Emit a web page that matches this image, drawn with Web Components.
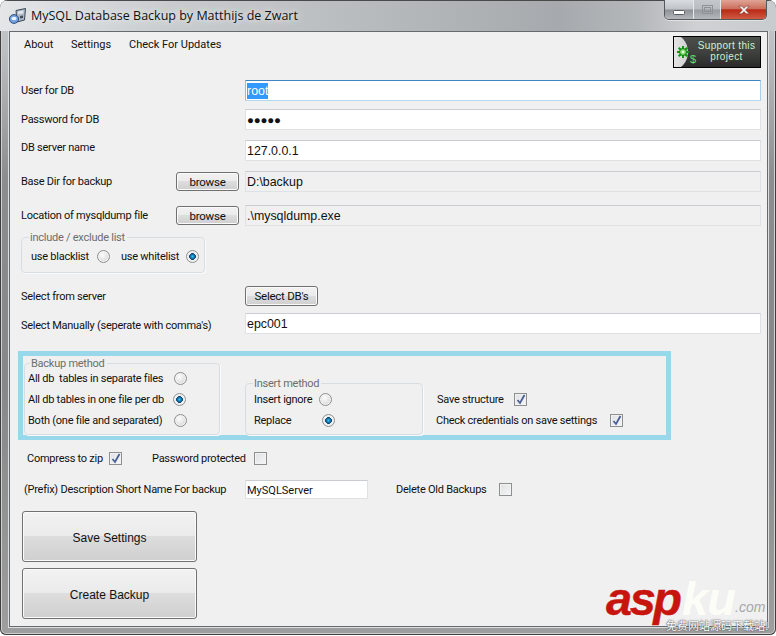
<!DOCTYPE html>
<html><head><meta charset="utf-8"><style>
html,body{margin:0;padding:0;width:776px;height:636px;overflow:hidden;background:#fff}
body{font:11px Roboto,"Liberation Sans",Arial,sans-serif;color:#111;letter-spacing:-.25px}
</style></head><body>
<app-window>
<title-bar slot="title">MySQL Database Backup by Matthijs de Zwart</title-bar>
<menu-row>
 <span style="width:47px">About</span><span style="width:58px">Settings</span><span>Check For Updates</span>
 <support-button slot="end">Support this<br>project</support-button>
</menu-row>
<form-row top="12" label="User for DB"><text-box selected value="root"></text-box></form-row>
<form-row top="8" label="Password for DB"><text-box value="●●●●●" pw></text-box></form-row>
<form-row top="10" shift="-3" label="DB server name"><text-box value="127.0.0.1"></text-box></form-row>
<form-row top="10" label="Base Dir for backup"><win-button slot="pre" w="63" h="19">browse</win-button><text-box readonly value="D:\backup"></text-box></form-row>
<form-row top="13" label="Location of mysqldump file"><win-button slot="pre" w="63" h="19">browse</win-button><text-box readonly value=".\mysqldump.exe"></text-box></form-row>
<group-box top="11" w="184" h="36" legend="include / exclude list">
 <div style="display:flex;align-items:center;height:100%;padding:3px 0 0 9px;box-sizing:border-box">
 <radio-opt w="66" style="margin-right:11px">use blacklist</radio-opt><radio-opt w="65" on>use whitelist</radio-opt></div>
</group-box>
<form-row top="13" h="20" label="Select from server"><win-button w="73" h="20">Select DB's</win-button></form-row>
<form-row top="7" shift="3" label="Select Manually (seperate with comma's)"><text-box value="epc001"></text-box></form-row>
<blue-box>
 <group-box w="196" h="72" legend="Backup method" legend-left="5" style="margin-left:1px;margin-top:7px">
  <div style="display:flex;flex-direction:column;padding:4px 0 0 3px">
   <radio-opt w="146" h="21">All db &nbsp;tables in separate files</radio-opt>
   <radio-opt w="145" h="21" on>All db tables in one file per db</radio-opt>
   <radio-opt w="146" h="21">Both (one file and separated)</radio-opt>
  </div>
 </group-box>
 <group-box w="178" h="52" legend="Insert method" legend-left="7" style="margin-left:25px;margin-top:27px">
  <div style="display:flex;flex-direction:column;padding:5px 0 0 8px">
   <radio-opt w="65" h="21">Insert ignore</radio-opt>
   <radio-opt w="68" h="21" on>Replace</radio-opt>
  </div>
 </group-box>
 <div style="display:flex;flex-direction:column;margin:33px 0 0 13px">
  <check-opt h="21" w="77" on style="margin-left:1px">Save structure</check-opt>
  <check-opt h="21" w="174" on>Check credentials on save settings</check-opt>
 </div>
</blue-box>
<div style="display:flex;margin-top:9px;margin-left:6px;height:18px;align-items:center">
 <check-opt w="82" on>Compress to zip</check-opt><span style="width:30px"></span><check-opt w="102">Password protected</check-opt>
</div>
<form-row top="13" h="19" pad="3" label="(Prefix) Description Short Name For backup"><text-box w="123" small value="MySQLServer"></text-box><check-opt style="margin-left:28px" w="103">Delete Old Backups</check-opt></form-row>
<win-button big style="margin:12px 0 0 1px" w="175" h="51">Save Settings</win-button>
<win-button big style="margin:6px 0 0 1px" w="175" h="51">Create Backup</win-button>
</app-window>
<site-mark></site-mark>
<script>
function def(name, css, html){
  customElements.define(name, class extends HTMLElement{
    connectedCallback(){
      if(this.shadowRoot) return;
      const s=this.attachShadow({mode:'open'});
      s.innerHTML='<style>'+css+'</style>'+(typeof html==='function'?html(this):html);
    }
  });
}
def('app-window',`
 :host{display:block;position:relative;width:776px;height:635px;box-sizing:border-box;border-radius:8px 8px 6px 6px;overflow:hidden;
  background:linear-gradient(#c6c9cb 0,#bcbfc1 8%,#8c8d8e 28%,#868788 60%,#9e9e9e 100%);
  box-shadow:inset 0 0 0 1px #3e3e3e,inset 0 0 0 2px #cfd1d3}
 .cap{height:31px}
 .client{box-sizing:border-box;margin:0 8px 0 9px;height:596px;background:#f0f0f0;border:1px solid #666a6d;padding:4px 0 0 11px;display:flex;flex-direction:column;box-shadow:0 0 0 1px #dcdee0}
`,`<div class="cap"><slot name="title"></slot></div><div class="client"><slot></slot></div>`);
def('title-bar',`
 :host{display:flex;align-items:center;height:31px;position:relative;padding:0 0 0 9px;font:12.5px "Open Sans","Noto Sans",sans-serif;letter-spacing:0;color:#111;
  background:linear-gradient(90deg,#e4e6e8 0,#dcdfe1 6%,#c9ccce 22%,#b6b9bb 50%,#a6aaae 72%,#b4b7ba 82%,#cfd1d3 90%,#c9cccf 100%);box-shadow:inset 0 1px 0 #4a4a4a}
 svg.i{flex:none;margin:1px 5px 0 0}
 .t{margin-top:0;text-shadow:0 0 5px #e8eaec,0 0 8px #e8eaec}
 .b{position:absolute;left:664px;top:0;display:flex;height:20px;width:103px;border:1px solid #56595c;border-top:0;border-radius:0 0 5px 5px;overflow:hidden;box-sizing:border-box;box-shadow:0 1px 0 #dfe1e3}
 .b i{display:flex;justify-content:center;box-sizing:border-box;height:100%}
 .m{width:29px;background:linear-gradient(#d9dce0 0,#bfc3c8 48%,#8d9196 52%,#b4b8bd 100%);border-right:1px solid #e6e8ea;align-items:flex-end;padding-bottom:4px}
 .x{width:27px;background:linear-gradient(#c4c7cb 0,#b9bcc0 48%,#989ca1 52%,#b4b8bc 100%);border-right:1px solid #e6e8ea;align-items:center}
 .c{flex:1;background:linear-gradient(#e0a496 0,#cd6f5e 45%,#b92a16 52%,#d05a43 100%);align-items:center}
`,()=>`<svg class="i" width="17" height="16" viewBox="0 0 17 16"><path d="M7 2.500L16.500.5l-1 11.500L8 14z" fill="#aeb8c6" stroke="#3a4652"/><path d="M9 3.500l5.500-1-.3 3-5 .8z" fill="#dfe6ee"/><path d="M11 8l3-.5v2.500l-3 .5z" fill="#45505e"/><ellipse cx="5" cy="11" rx="4.600" ry="4.400" fill="#6f9fe2" stroke="#33507c"/><ellipse cx="5" cy="10.500" rx="2.600" ry="1.700" fill="#eef4ff"/></svg>
 <span class="t"><slot></slot></span>
 <div class="b"><i class="m"><svg width="12" height="5"><rect x=".5" y=".5" width="11" height="4" rx="1" fill="#fff" stroke="#5a5e63"/></svg></i><i class="x"><svg width="11" height="9"><rect x=".5" y=".5" width="10" height="8" fill="none" stroke="#8d9399"/><rect x="2.500" y="2.500" width="6" height="4" fill="none" stroke="#8d9399"/></svg></i><i class="c"><svg width="12" height="10" viewBox="0 0 14 11"><path d="M1 1h3.400L7 3.700 9.600 1H13L8.800 5.500 13 10H9.600L7 7.300 4.400 10H1l4.200-4.500z" fill="#fff" stroke="#6b3a30" stroke-width=".7"/></svg></i></div>`);
def('menu-row',`
 :host{display:flex;height:32px;align-items:flex-start;position:relative;padding-left:3px;margin-right:6px;letter-spacing:0}
 .m{display:flex;padding-top:2px}
 ::slotted(span){display:block}
 .e{margin-left:auto}
`,`<div class="m"><slot></slot></div><div class="e"><slot name="end"></slot></div>`);
def('support-button',`
 :host{display:block;position:relative;width:88px;height:32px;box-sizing:border-box;border:1px solid #000;background:linear-gradient(#4d4f4d,#3f413f 50%,#2a2b2a);overflow:hidden;color:#d2f0cd;font:10px/11px "Liberation Sans",sans-serif;letter-spacing:.35px;text-align:center}
 .l{position:absolute;left:-18px;top:-3px;width:32px;height:36px;border-radius:50%;background:linear-gradient(90deg,#fff,#d0d0d0)}
 svg{position:absolute;left:3px;top:9px}
 .d{position:absolute;left:16px;top:16px;color:#5fe05f;font-size:11px;letter-spacing:0;line-height:13px}
 .t{position:absolute;left:19px;right:0;top:3px}
`,`<div class="l"></div><svg width="12" height="12" viewBox="0 0 12 12"><g stroke="#0a9a0a" stroke-width="2"><path d="M6 0v12M0 6h12M1.700 1.700l8.600 8.600M10.300 1.700l-8.600 8.600"/></g><circle cx="6" cy="6" r="3.500" fill="#7ddc6c" stroke="#0a7a0a"/><circle cx="6" cy="6" r="1.300" fill="#e8ffe0"/></svg><span class="d">$</span><div class="t"><slot></slot></div>`);
def('form-row',`
 :host{display:flex;align-items:center;position:relative;margin-right:6px}
 .l{width:155px;flex:none;white-space:nowrap;box-sizing:border-box}
 .p{width:69px;flex:none;display:flex}
 .c{flex:1;display:flex;align-items:center;min-width:0;height:100%}
`,t=>{
 const top=t.getAttribute('top')||0,h=t.getAttribute('h')||21,sh=+(t.getAttribute('shift')||0);
 t.style.marginTop=top+'px';t.style.height=h+'px';
 const pad=sh<0?`padding-bottom:${-sh*2}px;`:sh>0?`padding-top:${sh}px;`:'';
 const lp=t.getAttribute('pad')?`padding-left:${t.getAttribute('pad')}px;`:'';
 return `<div class="l" style="${pad}${lp}">${t.getAttribute('label')}</div><div class="p"><slot name="pre"></slot></div><div class="c"><slot></slot></div>`;
});
def('text-box',`
 :host{display:block;flex:1;box-sizing:border-box;height:100%;background:#fff;border:1px solid #dfe2e5;border-top-color:#c9cdd1;border-radius:1px;font:12.400px "Liberation Sans",sans-serif;letter-spacing:0;padding:0 0 0 1px;overflow:hidden}
 :host([selected]){border-color:#3f86bf #a9cfee #b5d8f2 #8fbde4}
 :host([readonly]){background:#f0f0f0}
 :host([small]){font:11px Roboto,sans-serif}
 div{display:flex;align-items:center;height:100%;white-space:nowrap;box-sizing:border-box;padding-top:1px}
 b{font-weight:normal;background:#3399ff;color:#fff;padding:1px 0}
 .pw{font-size:11.500px;letter-spacing:-.2px}
`,t=>{
 const v=t.getAttribute('value'),w=t.getAttribute('w');
 if(w){t.style.flex='none';t.style.width=w+'px'}
 return t.hasAttribute('selected')?`<div><b>${v}</b></div>`:`<div class="${t.hasAttribute('pw')?'pw':''}">${v}</div>`;
});
def('win-button',`
 :host{display:flex;align-items:center;justify-content:center;box-sizing:border-box;flex:none;border:1px solid #707070;border-radius:3px;background:linear-gradient(#f2f2f2 0,#ebebeb 48%,#dddddd 50%,#cfcfcf 100%);box-shadow:inset 0 0 0 1px #fbfbfb;font:11.500px Roboto,sans-serif;color:#111}
 :host([big]){font:12px "Liberation Sans",sans-serif;letter-spacing:0;padding-top:2px}
`,t=>{t.style.width=t.getAttribute('w')+'px';t.style.height=t.getAttribute('h')+'px';return '<slot></slot>'});
def('group-box',`
 :host{display:block;position:relative;box-sizing:border-box;flex:none;border:1px solid #d8dde2;border-radius:4px;box-shadow:1px 1px 0 #fafafa}
 .lg{position:absolute;top:-7px;background:#f0f0f0;padding:0 2px 0 1px;color:#6d6d6d;white-space:nowrap;line-height:13px}
`,t=>{t.style.width=t.getAttribute('w')+'px';t.style.height=t.getAttribute('h')+'px';
 if(t.getAttribute('top'))t.style.marginTop=t.getAttribute('top')+'px';
 return `<div class="lg" style="left:${t.getAttribute('legend-left')||7}px">${t.getAttribute('legend')}</div><slot></slot>`});
const hostH=t=>t.getAttribute('h')?`<style>:host{height:${t.getAttribute('h')}px}</style>`:'';
def('radio-opt',`
 :host{display:flex;align-items:center;white-space:nowrap;flex:none}
 .s{flex:none;width:var(--w)}
 i{flex:none;display:block;box-sizing:border-box;width:13px;height:13px;border-radius:50%;border:1px solid #8e8f8f;background:radial-gradient(circle at 40% 35%,#fdfdfd,#d9d9d9 75%);box-shadow:inset 0 0 0 1px #f4f4f4}
 i.on{background:radial-gradient(circle at 50% 50%,#3fc0ec 0,#0d6fa8 28%,#0b3a63 40%,#eef0f2 44%,#d8d8d8 100%)}
`,t=>`<span class="s" style="--w:${t.getAttribute('w')}px"><slot></slot></span><i class="${t.hasAttribute('on')?'on':''}"></i>`+hostH(t));
def('check-opt',`
 :host{display:flex;align-items:center;white-space:nowrap;flex:none}
 .s{flex:none;width:var(--w)}
 i{flex:none;display:block;box-sizing:border-box;width:13px;height:13px;border:1px solid #8e8f8f;background:linear-gradient(135deg,#dfe1e4,#f6f6f7);box-shadow:inset 0 0 0 1px #f2f2f2;position:relative}
 svg{position:absolute;left:1px;top:0}
`,t=>`<span class="s" style="--w:${t.getAttribute('w')}px"><slot></slot></span><i>${t.hasAttribute('on')?'<svg width="10" height="11" viewBox="0 0 10 11"><path d="M1.500 6l2.500 3L8.500 1" fill="none" stroke="#4a5f97" stroke-width="1.800"/></svg>':''}</i>`+hostH(t));
def('blue-box',`
 :host{display:flex;align-items:flex-start;box-sizing:border-box;width:653px;height:89px;margin:17px 0 0 -3px;border:5px solid #98d8ea}
`,'<slot></slot>');
def('site-mark',`
 :host{position:absolute;left:606px;top:578px;width:170px;height:56px;display:block;pointer-events:none;font-family:"Liberation Sans",sans-serif;letter-spacing:0}
 .a{position:absolute;left:0;top:3px;font:italic bold 47px/36px "Liberation Sans",sans-serif;color:#c8140e;letter-spacing:-2.500px;-webkit-text-stroke:.4px #c8140e}
 .k{position:absolute;left:76px;top:3px;font:italic bold 47px/36px "Liberation Sans",sans-serif;color:#fdfdf8;letter-spacing:-1px}
 .c{position:absolute;left:129px;top:20px;font:italic 14px/18px "Liberation Sans",sans-serif;color:#a8a8a8}
 .s{position:absolute;left:60px;top:40px;font:11px/14px "Noto Sans CJK SC",sans-serif;color:#fff;text-shadow:0 0 2px #555,0 0 1px #333;white-space:nowrap}
`,`<div class="a">asp</div><div class="k">ku</div><div class="c">.com</div><div class="s">免费网站源码下载站!</div>`);
</script>
</body></html>
